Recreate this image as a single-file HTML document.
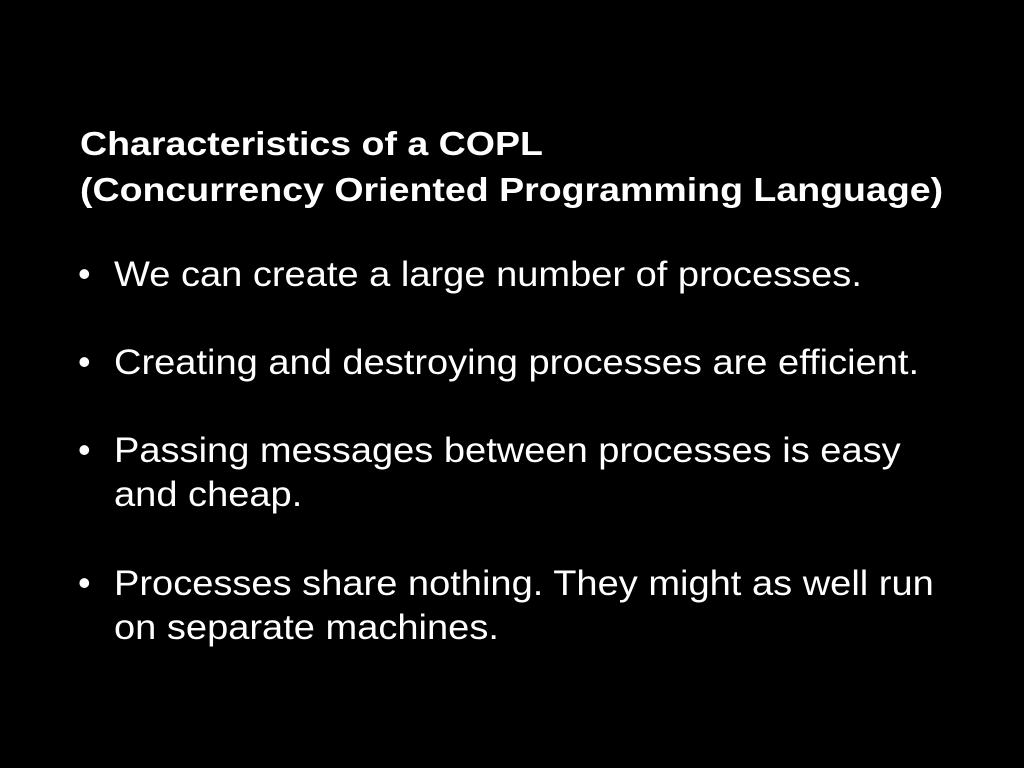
<!DOCTYPE html>
<html><head><style>
body{margin:0;width:1024px;height:768px;background:#000;overflow:hidden;font-family:"Liberation Sans",sans-serif;color:#fff}
.t{position:absolute;left:80px;top:121px;font-weight:bold;font-size:33px;line-height:46px;transform:scaleX(1.137);transform-origin:0 0;white-space:nowrap}
.b{position:absolute;left:114px;font-size:35px;line-height:44px;transform:scaleX(1.087);transform-origin:0 0;white-space:nowrap}
.d{position:absolute;left:78px;font-size:36px;line-height:44px}
</style></head><body>
<div class="t">Characteristics of a COPL<br>(Concurrency Oriented Programming Language)</div>
<div class="d" style="top:252px">•</div>
<div class="b" style="top:253px">We can create a large number of processes.</div>
<div class="d" style="top:340px">•</div>
<div class="b" style="top:341px">Creating and destroying processes are efficient.</div>
<div class="d" style="top:428px">•</div>
<div class="b" style="top:429px">Passing messages between processes is easy<br>and cheap.</div>
<div class="d" style="top:561px">•</div>
<div class="b" style="top:562px">Processes share nothing. They might as well run<br>on separate machines.</div>
</body></html>
